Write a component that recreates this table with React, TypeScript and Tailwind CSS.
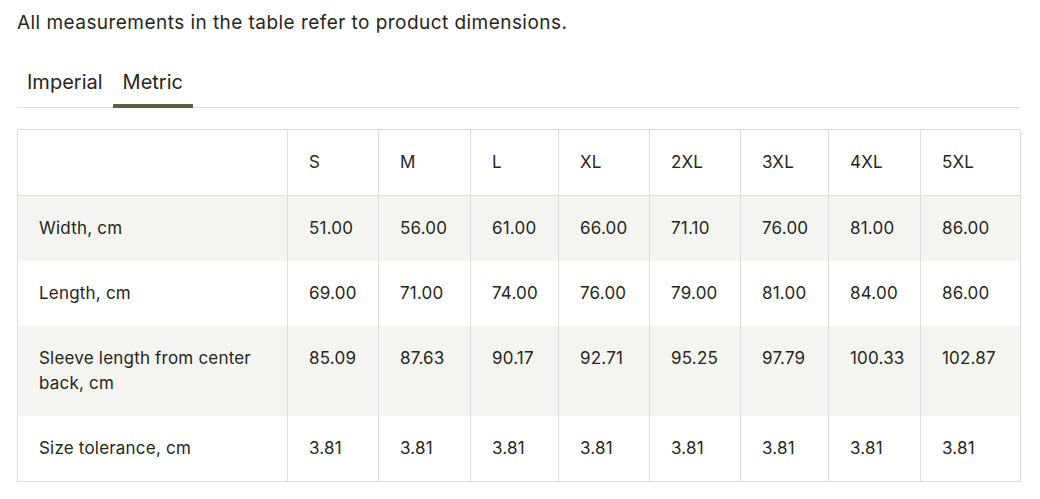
const sizes = ["S", "M", "L", "XL", "2XL", "3XL", "4XL", "5XL"]
const colWidths = [91, 92, 88, 91, 91, 88, 92, 100]

const rows: { label: string; values: string[] }[] = [
  { label: "Width, cm", values: ["51.00", "56.00", "61.00", "66.00", "71.10", "76.00", "81.00", "86.00"] },
  { label: "Length, cm", values: ["69.00", "71.00", "74.00", "76.00", "79.00", "81.00", "84.00", "86.00"] },
  {
    label: "Sleeve length from center back, cm",
    values: ["85.09", "87.63", "90.17", "92.71", "95.25", "97.79", "100.33", "102.87"],
  },
  { label: "Size tolerance, cm", values: ["3.81", "3.81", "3.81", "3.81", "3.81", "3.81", "3.81", "3.81"] },
]

export default function App() {
  return (
    <div className="min-h-screen bg-white px-[17px] pt-[10px] font-['Inter',sans-serif] text-[#26261c]">
      <p className="text-[19px] leading-[26px] tracking-[0.45px]">
        All measurements in the table refer to product dimensions.
      </p>

      <div className="mt-[33px] flex w-[1003px] border-b border-[#e2e2e2] text-[20px]">
        <button className="px-[10px] pb-[12px] leading-[26px]">Imperial</button>
        <button className="-mb-px border-b-4 border-[#5e5d48] px-[10px] pb-[9px] leading-[26px]">
          Metric
        </button>
      </div>

      <table className="mt-[21px] w-[1003px] table-fixed border-collapse text-[17px] leading-[25px] tracking-[0.2px]">
        <colgroup>
          <col className="w-[270px]" />
          {colWidths.map((w, i) => (
            <col key={i} style={{ width: w }} />
          ))}
        </colgroup>
        <thead>
          <tr>
            <th className="border border-[#dcdcdc] bg-white px-[21px] py-[20px] text-left font-normal" />
            {sizes.map((s) => (
              <th
                key={s}
                className="border border-[#dcdcdc] bg-white px-[21px] py-[20px] text-left align-top font-normal"
              >
                {s}
              </th>
            ))}
          </tr>
        </thead>
        <tbody>
          {rows.map((row, i) => (
            <tr key={row.label} className={i % 2 === 0 ? "bg-[#f4f4f0]" : "bg-white"}>
              <td className="border-x border-[#dcdcdc] px-[21px] py-[20px] align-top">{row.label}</td>
              {row.values.map((v, j) => (
                <td key={j} className="border-x border-[#dcdcdc] px-[21px] py-[20px] align-top">
                  {v}
                </td>
              ))}
            </tr>
          ))}
          <tr>
            <td colSpan={9} className="border-t border-[#dcdcdc] p-0" />
          </tr>
        </tbody>
      </table>
    </div>
  )
}
